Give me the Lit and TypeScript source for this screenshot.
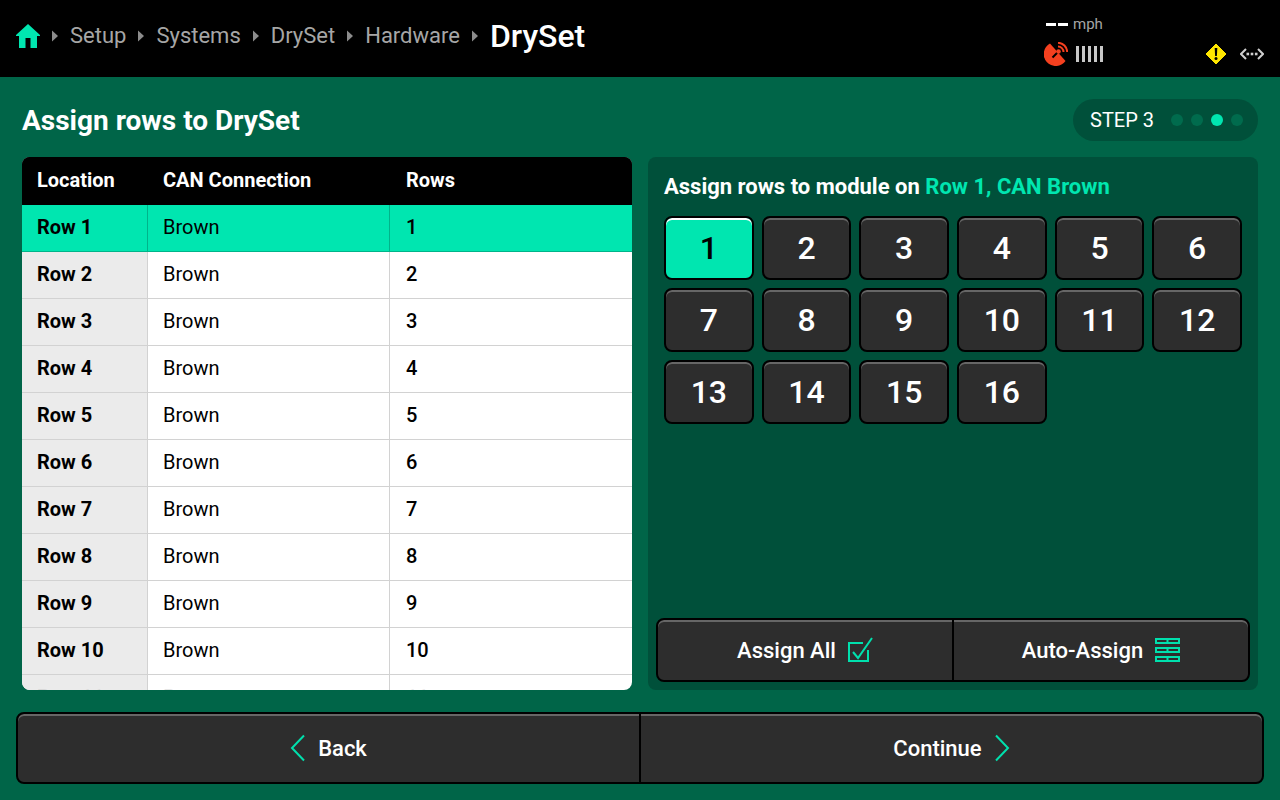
import { LitElement, html, css, svg } from "lit";
import { customElement } from "lit/decorators.js";

const caret = html`<svg class="caret" width="6" height="12" viewBox="0 0 6 12"><path d="M0 0.5 6 6 0 11.5Z" fill="#8c8c8c"/></svg>`;

const chevL = html`<svg width="16" height="28" viewBox="0 0 16 28"><path d="M14 1.5 2 14l12 12.5" fill="none" stroke="#00e0ad" stroke-width="2"/></svg>`;
const chevR = html`<svg width="16" height="28" viewBox="0 0 16 28"><path d="M2 1.5 14 14 2 26.5" fill="none" stroke="#00e0ad" stroke-width="2"/></svg>`;

const checkIcon = html`<svg width="26" height="26" viewBox="0 0 26 26"><path d="M21 13v11H2V6h14" fill="none" stroke="#00e0ad" stroke-width="2"/><path d="M6 15l5 6L25 1" fill="none" stroke="#00e0ad" stroke-width="2"/></svg>`;

const tableIcon = html`<svg width="26" height="26" viewBox="0 0 26 26">${[2, 11, 20].map(
  (y) => svg`<rect x="2" y="${y}" width="23" height="4" fill="none" stroke="#00e0ad" stroke-width="2"/><path d="M13.500 ${y}v4" stroke="#00e0ad" stroke-width="2"/>`
)}</svg>`;

const rows = Array.from({ length: 11 }, (_, i) => i + 1);
const nums = Array.from({ length: 16 }, (_, i) => i + 1);

@customElement("app-root")
export class AppRoot extends LitElement {
  static styles = css`
    :host {
      display: flex;
      flex-direction: column;
      width: 1280px;
      height: 800px;
      background: #006548;
      font-family: Roboto, "Liberation Sans", sans-serif;
      color: #fff;
      overflow: hidden;
    }
    .top {
      height: 77px;
      flex: none;
      background: #000;
      display: flex;
      align-items: center;
      padding: 0 16px;
      box-sizing: border-box;
    }
    .crumbs {
      display: flex;
      align-items: center;
      gap: 12px;
      font-size: 22px;
      color: #a6a6a6;
      padding-bottom: 6px;
    }
    .crumbs svg { display: block; }
    .current {
      font-size: 32px;
      font-weight: 500;
      color: #fff;
    }
    .status {
      margin-left: auto;
      display: flex;
      align-items: flex-end;
      padding-top: 4px;
    }
    .vitals {
      width: 160px;
      display: flex;
      flex-direction: column;
      gap: 9px;
    }
    .speed {
      display: flex;
      align-items: center;
      gap: 6px;
      padding-left: 2px;
      font-size: 15px;
      color: #a6a6a6;
      height: 18px;
    }
    .dash { width: 10px; height: 3px; background: #fff; margin-right: -4px; }
    .speed span.unit { margin-left: 3px; }
    .gps { display: flex; align-items: center; gap: 8px; height: 24px; }
    .bars { display: flex; gap: 3px; }
    .bars i { display: block; width: 3px; height: 16px; background: #c8c8c8; }
    .alerts { display: flex; align-items: center; gap: 12px; height: 24px; }
    .alerts svg, .gps svg { display: block; }

    .main {
      flex: 1;
      display: flex;
      flex-direction: column;
      padding: 0 16px 16px;
      min-height: 0;
    }
    .title {
      height: 80px;
      flex: none;
      box-sizing: border-box;
      display: flex;
      align-items: center;
      justify-content: space-between;
      padding: 6px 6px 0;
    }
    h1 { margin: 0; font-size: 28px; font-weight: 700; }
    .pill {
      display: flex;
      align-items: center;
      height: 42px;
      padding: 0 15px 0 17px;
      border-radius: 21px;
      background: #00503a;
      font-size: 20px;
      gap: 11px;
    }
    .pill .dots { display: flex; gap: 8px; margin-left: 6px; }
    .pill .dots i { display: block; width: 12px; height: 12px; border-radius: 50%; background: #006b4d; }
    .pill .dots i.on { background: #00e6b0; }

    .content {
      height: 533px;
      flex: none;
      margin: 0 6px;
      display: grid;
      grid-template-columns: 610px 610px;
      gap: 16px;
    }
    .table {
      background: #fff;
      border-radius: 8px;
      overflow: hidden;
      color: #000;
      font-size: 20px;
    }
    .tr {
      display: grid;
      grid-template-columns: 126px 242px 1fr;
      height: 47px;
      box-sizing: border-box;
      border-bottom: 1px solid #d2d2d2;
    }
    .tr > div {
      display: flex;
      align-items: center;
      padding: 0 0 2px 15px;
      border-right: 1px solid #d2d2d2;
    }
    .tr > div:last-child { border-right: 0; padding-left: 16px; }
    .tr > div:first-child { background: #ebebeb; font-weight: 700; }
    .tr > div:nth-child(3) { font-weight: 500; }
    .tr.head { background: #000; color: #fff; border-bottom: 0; font-weight: 700; height: 48px; }
    .tr.head > div { border-right: 0; background: #000; font-weight: 700; padding-bottom: 2px; }
    .tr.sel { background: #00e6b0; border-bottom-color: #00b48a; }
    .tr.sel > div { border-right-color: #00b48a; background: #00e6b0; }
    .tr.fade > div { color: #e6e6e6; }
    .tr.fade > div:first-child { color: #d8d8d8; }

    .panel {
      background: #00503a;
      border-radius: 8px;
      padding: 0 8px 8px;
      display: flex;
      flex-direction: column;
    }
    h2 {
      margin: 0;
      height: 59px;
      padding: 0 8px;
      box-sizing: border-box;
      display: flex;
      align-items: center;
      gap: 0.25em;
      font-size: 22px;
      font-weight: 700;
      flex: none;
    }
    h2 em { font-style: normal; color: #00e6b0; }
    .grid {
      display: grid;
      grid-template-columns: repeat(6, 1fr);
      grid-auto-rows: 64px;
      gap: 8px;
      padding: 0 8px;
      flex: 1;
      align-content: start;
    }
    .btn {
      box-sizing: border-box;
      border: 2px solid #000;
      border-radius: 8px;
      background: #2d2d2d;
      box-shadow: inset 0 2px 0 #666;
      color: #fff;
      font-family: inherit;
      display: flex;
      align-items: center;
      justify-content: center;
      padding: 0;
    }
    .num { font-size: 32px; font-weight: 500; }
    .num.on { background: #00e6b0; color: #000; box-shadow: inset 0 2px 0 #fff; }
    .pair { display: flex; flex: none; }
    .pair .btn { flex: 1 1 0; gap: 11px; }
    .pair .btn:first-child { border-top-right-radius: 0; border-bottom-right-radius: 0; border-right-width: 1px; }
    .pair .btn:last-child { border-top-left-radius: 0; border-bottom-left-radius: 0; border-left-width: 1px; }
    .assign { height: 64px; }
    .assign .btn { font-size: 22px; font-weight: 500; }
    .nav { height: 72px; margin-top: 22px; }
    .nav .btn { font-size: 22px; font-weight: 500; gap: 12px; }
    svg { flex: none; }
  `;

  render() {
    return html`
      <div class="top">
        <div class="crumbs">
          <svg class="home" width="24" height="24" viewBox="0 0 24 24"><path d="M12 0 24 11v1h-3v12h-6.500V14h-5V24H3V12H0v-1Z" fill="#00e6b0"/></svg>
          ${caret}<span>Setup</span>${caret}<span>Systems</span>${caret}<span>DrySet</span>${caret}<span>Hardware</span>${caret}
          <span class="current">DrySet</span>
        </div>
        <div class="status">
          <div class="vitals">
            <div class="speed"><i class="dash"></i><i class="dash"></i><span class="unit">mph</span></div>
            <div class="gps">
              <svg width="24" height="24" viewBox="0 0 24 24">
                <path d="M6 1.500A12 12 0 1 0 21.500 19Z" fill="#f5401f"/>
                <path d="M14 10 8.500 15.500" stroke="#000" stroke-width="2"/>
                <circle cx="14.500" cy="9.500" r="2.300" fill="#f5401f"/>
                <path d="M14 4.500A5.500 5.500 0 0 1 19.500 10M14 .8A9.500 9.500 0 0 1 23.200 10" fill="none" stroke="#f5401f" stroke-width="2"/>
              </svg>
              <div class="bars"><i></i><i></i><i></i><i></i><i></i></div>
            </div>
          </div>
          <div class="alerts">
            <svg width="24" height="24" viewBox="0 0 24 24"><path d="M12 2 22 12 12 22 2 12Z" fill="#ffe600" stroke="#ffe600" stroke-linejoin="round"/><path d="M10.700 6h2.600l-.4 8h-1.800Z" fill="#000"/><circle cx="12" cy="16.500" r="1.500" fill="#000"/></svg>
            <svg width="24" height="24" viewBox="0 0 24 24"><path d="M6 7 1 12l5 5M18 7l5 5-5 5" fill="none" stroke="#cfcfcf" stroke-width="2"/><rect x="6.500" y="10.700" width="2.600" height="2.600" fill="#cfcfcf"/><rect x="10.700" y="10.700" width="2.600" height="2.600" fill="#cfcfcf"/><rect x="14.900" y="10.700" width="2.600" height="2.600" fill="#cfcfcf"/></svg>
          </div>
        </div>
      </div>
      <div class="main">
        <div class="title">
          <h1>Assign rows to DrySet</h1>
          <div class="pill">STEP 3
            <div class="dots"><i></i><i></i><i class="on"></i><i></i></div>
          </div>
        </div>
        <div class="content">
          <div class="table">
            <div class="tr head"><div>Location</div><div>CAN Connection</div><div>Rows</div></div>
            ${rows.map(
              (r) => html`<div class="tr ${r === 1 ? "sel" : ""} ${r === 11 ? "fade" : ""}">
                <div>Row ${r}</div><div>Brown</div><div>${r}</div>
              </div>`
            )}
          </div>
          <div class="panel">
            <h2>Assign rows to module on <em>Row 1, CAN Brown</em></h2>
            <div class="grid">
              ${nums.map((n) => html`<button class="btn num ${n === 1 ? "on" : ""}">${n}</button>`)}
            </div>
            <div class="pair assign">
              <button class="btn">Assign All ${checkIcon}</button>
              <button class="btn">Auto-Assign ${tableIcon}</button>
            </div>
          </div>
        </div>
        <div class="pair nav">
          <button class="btn">${chevL} Back</button>
          <button class="btn">Continue ${chevR}</button>
        </div>
      </div>
    `;
  }
}
